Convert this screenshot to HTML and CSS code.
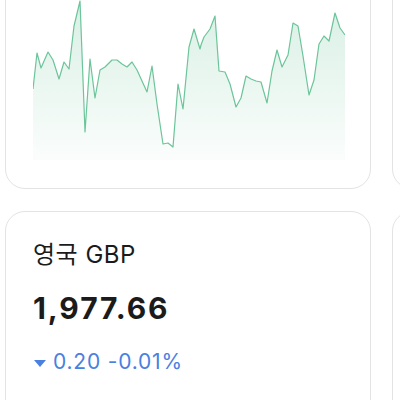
FILE: index.html
```html
<!DOCTYPE html>
<html lang="ko">
<head>
    <meta charset="UTF-8">
    <meta name="viewport" content="width=device-width, initial-scale=1.0">
    <title>환율</title>
    <link rel="stylesheet" href="styles.css">
</head>
<body>
    <div class="card-grid">
        <!-- Chart card (top is scrolled out of view) -->
        <div class="card">
            <svg class="spark" width="312" height="160" viewBox="0 0 312 160">
                <defs>
                    <linearGradient id="sparkFill" x1="0" y1="0" x2="0" y2="1">
                        <stop offset="0" stop-color="#6cc49a" stop-opacity="0.26"/>
                        <stop offset="1" stop-color="#6cc49a" stop-opacity="0.03"/>
                    </linearGradient>
                </defs>
                <path class="spark-fill" d="M0,89 L4,53 L8,68 L15,52 L20,60 L26,79 L31,62 L36,69 L41,26 L47,1 L52,132 L57,59 L62,98 L67,70 L72,67 L79,60 L84,60 L89,64 L94,67 L99,62 L104,70 L114,92 L119,66 L124,104 L130,144 L135,143 L140,147 L145,84 L150,109 L156,47 L161,29 L167,49 L168,45 L171,37 L177,29 L182,16 L186,71 L192,72 L197,84 L203,107 L208,98 L213,76 L218,79 L223,81 L228,82 L234,103 L239,71 L244,50 L249,67 L255,55 L260,23 L265,26 L270,56 L276,95 L281,80 L286,44 L291,36 L296,41 L302,13 L307,28 L312,35 L312,160 L0,160 Z"/>
                <path class="spark-line" d="M0,89 L4,53 L8,68 L15,52 L20,60 L26,79 L31,62 L36,69 L41,26 L47,1 L52,132 L57,59 L62,98 L67,70 L72,67 L79,60 L84,60 L89,64 L94,67 L99,62 L104,70 L114,92 L119,66 L124,104 L130,144 L135,143 L140,147 L145,84 L150,109 L156,47 L161,29 L167,49 L168,45 L171,37 L177,29 L182,16 L186,71 L192,72 L197,84 L203,107 L208,98 L213,76 L218,79 L223,81 L228,82 L234,103 L239,71 L244,50 L249,67 L255,55 L260,23 L265,26 L270,56 L276,95 L281,80 L286,44 L291,36 L296,41 L302,13 L307,28 L312,35"/>
            </svg>
        </div>
        <div class="card"></div>

        <!-- Currency card -->
        <div class="card">
            <div class="cur-name">영국 GBP</div>
            <div class="cur-rate">1,977.66</div>
            <div class="cur-change down">
                <span class="arrow"></span>
                <span>0.20 -0.01%</span>
            </div>
        </div>
        <div class="card"></div>
    </div>
</body>
</html>
```

FILE: styles.css
```css
body {
    margin: 0;
    font-family: 'Inter', 'Noto Sans CJK KR', sans-serif;
    background-color: #fff;
    color: #1b1b1b;
    overflow: hidden;
}
.card-grid {
    display: grid;
    grid-template-columns: 366px 366px;
    column-gap: 21px;
    row-gap: 22px;
    margin-top: -28px;
    padding-left: 5px;
}
.card {
    border: 1px solid #e3e3e3;
    border-radius: 20px;
    padding: 27px 27px 28px;
    min-height: 160px;
}
.spark {
    display: block;
}
.spark-fill {
    fill: url(#sparkFill);
}
.spark-line {
    fill: none;
    stroke: #6cc49a;
    stroke-width: 1.2;
    stroke-linejoin: round;
}
.cur-name {
    font-size: 24px;
    line-height: 30px;
    letter-spacing: 0.5px;
    margin-top: 1px;
}
.cur-rate {
    font-size: 30px;
    font-weight: 700;
    line-height: 36px;
    letter-spacing: 1.9px;
    margin-top: 20px;
}
.cur-change {
    display: flex;
    align-items: center;
    font-size: 21px;
    line-height: 28px;
    letter-spacing: 0.8px;
    margin-top: 22px;
}
.cur-change.down {
    color: #4a80e0;
}
.arrow {
    width: 0;
    height: 0;
    border-left: 6px solid transparent;
    border-right: 6px solid transparent;
    border-top: 7px solid currentColor;
    margin: 2px 7px 0 1px;
}
```
